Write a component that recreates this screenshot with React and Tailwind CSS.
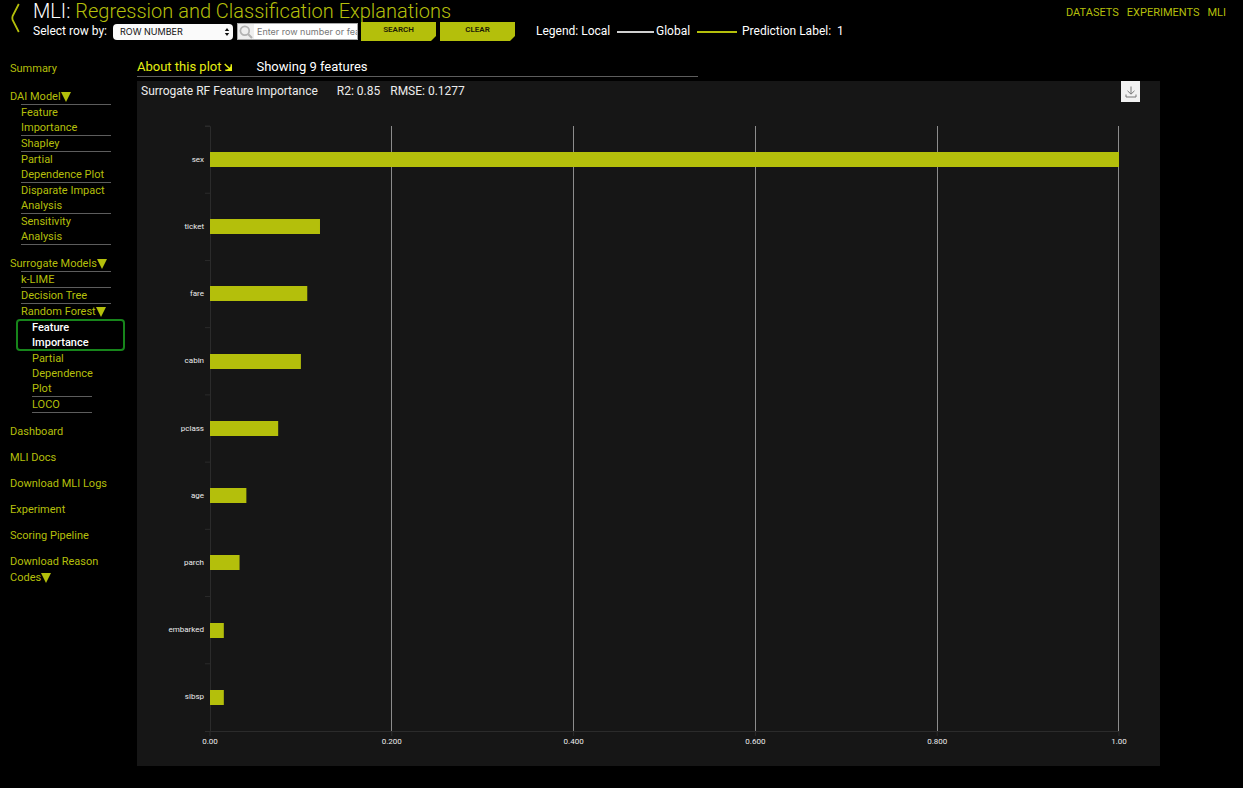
const bars = [
  { name: 'sex', value: 1 },
  { name: 'ticket', value: 0.121 },
  { name: 'fare', value: 0.107 },
  { name: 'cabin', value: 0.1 },
  { name: 'pclass', value: 0.075 },
  { name: 'age', value: 0.04 },
  { name: 'parch', value: 0.0325 },
  { name: 'embarked', value: 0.0152 },
  { name: 'sibsp', value: 0.0152 },
];

const ticks = [
  { value: 0, label: '0.00' },
  { value: 0.2, label: '0.200' },
  { value: 0.4, label: '0.400' },
  { value: 0.6, label: '0.600' },
  { value: 0.8, label: '0.800' },
  { value: 1, label: '1.00' },
];

const X0 = 73;
const PLOT_W = 909;
const Y0 = 22;
const Y1 = 627;
const STEP = (Y1 - Y0) / bars.length;

function Chart() {
  return (
    <svg viewBox="0 0 1023 662" className="block w-full" role="img" aria-label="Feature importance bar chart">
      <g stroke="#2b2b2b">
        <path d={`M${X0 - 5} ${Y0 + 0.5}H${X0 + 0.5}V${Y1 + 0.5}`} fill="none" />
        <path d={`M${X0 - 5} ${Y1 + 0.5}H${X0 + PLOT_W}`} />
        {bars.map((b, i) => (
          <path key={b.name} d={`M${X0 - 5} ${Y0 + STEP * i}H${X0}`} />
        ))}
        {ticks.map((t) => (
          <path key={t.label} d={`M${X0 + PLOT_W * t.value} ${Y1}v5`} />
        ))}
      </g>
      <g stroke="#8c8c8c">
        {ticks.slice(1).map((t) => (
          <path key={t.label} d={`M${Math.floor(X0 + PLOT_W * t.value) + 0.5 - (t.value === 1 ? 1 : 0)} ${Y0}V${Y1}`} />
        ))}
      </g>
      {bars.map((b, i) => (
        <g key={b.name}>
          <rect x={X0} y={Math.round(Y0 + STEP * (i + 0.5) - 7.6)} width={PLOT_W * b.value} height="15" fill="#b4bf0b" />
          <text x={X0 - 6} y={Y0 + STEP * (i + 0.5) + 2} textAnchor="end" fontSize="8" fill="#ececec">
            {b.name}
          </text>
        </g>
      ))}
      {ticks.map((t) => (
        <text key={t.label} x={X0 + PLOT_W * t.value} y="640" textAnchor="middle" fontSize="8" fill="#ececec">
          {t.label}
        </text>
      ))}
    </svg>
  );
}

function Caret() {
  return (
    <svg viewBox="0 0 10 10" className="inline-block size-[10px] shrink-0" aria-hidden="true">
      <path d="M0 0H10L5 10Z" fill="currentColor" />
    </svg>
  );
}

function Item({ children }) {
  return (
    <li className="border-b border-[#5d5d5d]">
      <a href="#" className="block">
        {children}
      </a>
    </li>
  );
}

function Sidebar() {
  return (
    <nav aria-label="Explanations" className="w-[137px] shrink-0 pl-[10px] pt-[4px] text-[11px] leading-[15px] text-[#b4bf0b]">
      <a href="#" className="block">Summary</a>
      <div className="mt-[13px] w-[101px]">
        <a href="#" className="flex h-[15px] items-center whitespace-nowrap">
          DAI Model
          <Caret />
        </a>
        <ul className="ml-[11px] border-t border-[#5d5d5d]">
          <Item>Feature Importance</Item>
          <Item>Shapley</Item>
          <Item>Partial<br />Dependence Plot</Item>
          <Item>Disparate Impact Analysis</Item>
          <Item>Sensitivity Analysis</Item>
        </ul>
      </div>
      <div className="mt-[11px] w-[101px]">
        <a href="#" className="flex h-[15px] items-center whitespace-nowrap">
          Surrogate Models
          <Caret />
        </a>
        <ul className="ml-[11px] border-t border-[#5d5d5d]">
          <Item>k-LIME</Item>
          <Item>Decision Tree</Item>
          <li>
            <a href="#" className="flex h-[15px] items-center whitespace-nowrap">
              Random Forest
              <Caret />
            </a>
            <ul>
              <li className="-ml-[5px] w-[109px] rounded border-2 border-[#17851b] pl-[14px] font-medium text-white">
                <a href="#" aria-current="page" className="-my-px block w-[70px]">Feature Importance</a>
              </li>
              <li className="ml-[11px] w-[60px] border-b border-[#5d5d5d]">
                <a href="#" className="block">Partial Dependence Plot</a>
              </li>
              <li className="ml-[11px] w-[60px] border-b border-[#5d5d5d]">
                <a href="#" className="block">LOCO</a>
              </li>
            </ul>
          </li>
        </ul>
      </div>
      <ul className="mt-[11px] flex w-[101px] flex-col gap-[11px]">
        <li><a href="#">Dashboard</a></li>
        <li><a href="#">MLI Docs</a></li>
        <li><a href="#">Download MLI Logs</a></li>
        <li><a href="#">Experiment</a></li>
        <li><a href="#">Scoring Pipeline</a></li>
        <li>
          <a href="#" className="block leading-4">Download Reason Codes<Caret /></a>
        </li>
      </ul>
    </nav>
  );
}

function ActionButton({ children }) {
  return (
    <button
      type="button"
      className="h-[19px] w-[75px] bg-[#b4bf0b] pb-[3px] text-[8px] font-semibold leading-4 text-[#1c1c05] [clip-path:polygon(0_0,100%_0,100%_calc(100%-5px),calc(100%-5px)_100%,0_100%)]"
    >
      {children}
    </button>
  );
}

export default function App() {
  return (
    <div className="min-h-screen bg-black font-['Roboto',sans-serif] text-white">
      <header className="flex items-start pr-[17px]">
        <a href="#" aria-label="Back" className="w-[33px] shrink-0 pl-[10px] pt-[3px]">
          <svg viewBox="0 0 10 30" className="h-[30px] w-[10px]" fill="none" stroke="#b4bf0b" strokeWidth="1.8">
            <path d="M8.8 1L2.6 13Q2 15 2.6 17L8.8 29" />
          </svg>
        </a>
        <div className="min-w-0 grow">
          <h1 className="h-[22px] text-[20px] font-light leading-[22px]">
            MLI: <span className="text-[#b4bf0b]">Regression and Classification Explanations</span>
          </h1>
          <div className="flex items-start text-[12px] leading-[19px]">
            <label htmlFor="row-by" className="w-[80px] whitespace-nowrap">Select row by:</label>
            <div className="relative mt-[2px] w-[120px]">
              <select id="row-by" className="block h-4 w-full appearance-none rounded bg-[#fafafa] pl-[7px] font-['Inter',sans-serif] text-[9px] leading-4 text-[#111]">
                <option>ROW NUMBER</option>
              </select>
              <svg viewBox="0 0 6 10" className="pointer-events-none absolute right-[3px] top-[3px] h-[10px] w-[6px]" aria-hidden="true">
                <path d="M3 1L5.2 4H.8ZM3 9L5.2 6H.8Z" fill="#111" />
              </svg>
            </div>
            <div className="ml-1 mt-px flex h-[17px] w-[121px] items-center border border-[#a8a8a8] bg-white">
              <span className="flex h-full w-[16px] shrink-0 items-center justify-center bg-[#efefef]">
                <svg viewBox="0 0 14 14" className="size-[14px]" fill="none" stroke="#b3b3b3" strokeWidth="1.7" aria-hidden="true">
                  <circle cx="5.8" cy="5.8" r="4.4" />
                  <path d="M9 9L13 13" strokeWidth="2.2" />
                </svg>
              </span>
              <input
                type="text"
                aria-label="Row search"
                placeholder="Enter row number or feature"
                className="h-full w-full min-w-0 pl-[3px] font-['Inter',sans-serif] text-[9px] text-black placeholder:text-[#777]"
              />
            </div>
            <div className="ml-[3px] flex gap-1">
              <ActionButton>SEARCH</ActionButton>
              <ActionButton>CLEAR</ActionButton>
            </div>
            <div className="ml-[21px] flex items-center whitespace-nowrap">
              <span className="w-[81px]">Legend: Local</span>
              <span className="h-[2px] w-[37px] bg-[#cfcfcf]" />
              <span className="ml-[2px] w-[41px]">Global</span>
              <span className="h-[2px] w-[40px] bg-[#b4bf0b]" />
              <span className="ml-[5px]">Prediction Label:&nbsp; 1</span>
            </div>
          </div>
        </div>
        <nav aria-label="Main" className="flex gap-[8px] pt-[5px] text-[11px] leading-4 text-[#b4bf0b]">
          <a href="#">DATASETS</a>
          <a href="#">EXPERIMENTS</a>
          <a href="#">MLI</a>
        </nav>
      </header>

      <div className="mt-4 flex items-start">
        <Sidebar />
        <main className="mr-[83px] min-w-0 grow">
          <div className="flex h-5 w-[561px] gap-[24px] border-b border-[#5d5d5d] text-[13px] leading-5">
            <button type="button" className="flex items-center gap-[3px] whitespace-nowrap text-[#e6ee14]">
              About this plot
              <svg viewBox="0 0 9 9" className="size-[8px]" aria-hidden="true">
                <path d="M.8 1.2L5.5 5.6M8.2 1.5V8.2H1.5" stroke="currentColor" strokeWidth="1.6" fill="none" />
                <path d="M8.5 3V8.5H2.5Z" fill="currentColor" />
              </svg>
            </button>
            <span>Showing 9 features</span>
          </div>
          <section className="mt-1 bg-[#161616]">
            <div className="flex h-[23px] items-start justify-between pl-1 pr-[20px]">
              <h2 className="flex text-[12px] leading-5 text-[#ececec]">
                <span>Surrogate RF Feature Importance</span>
                <span className="ml-[19px]">R2: 0.85</span>
                <span className="ml-[10px]">RMSE: 0.1277</span>
              </h2>
              <button type="button" aria-label="Download chart" className="flex h-[21px] w-[19px] items-center justify-center bg-[#f2f2f2]">
                <svg viewBox="0 0 12 12" className="size-3" fill="none" stroke="#777" aria-hidden="true">
                  <path d="M6 .5V8M2.5 4.8L6 8.2L9.5 4.8M1 8.5V11H11V8.5" />
                </svg>
              </button>
            </div>
            <Chart />
          </section>
        </main>
      </div>
    </div>
  );
}
